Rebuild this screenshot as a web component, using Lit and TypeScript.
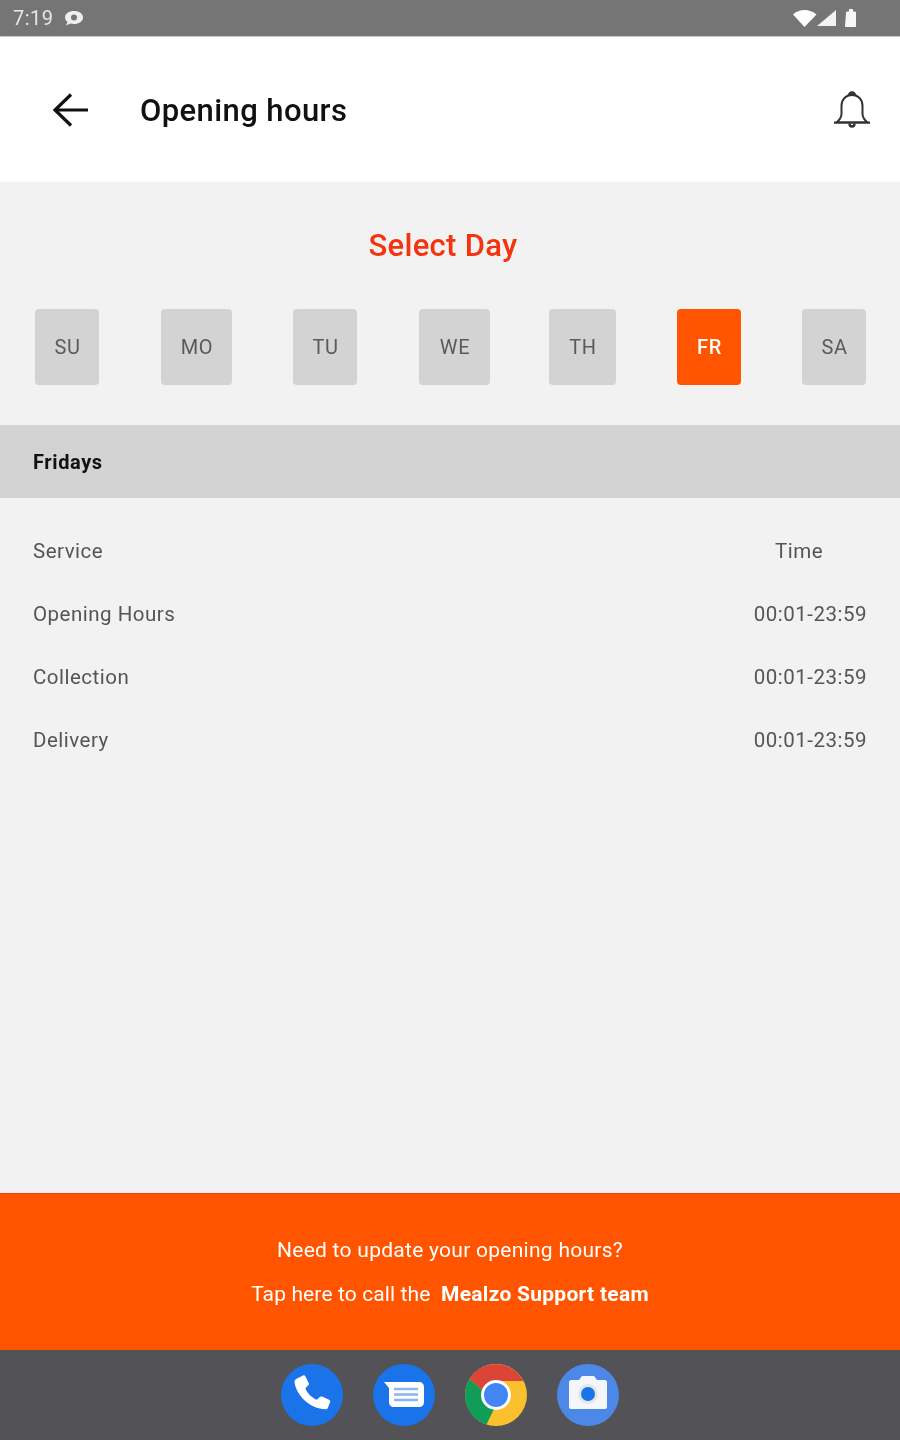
import { LitElement, html, css } from "lit";
import { customElement } from "lit/decorators.js";

const days = [
  { label: "SU", w: 64, gap: 0 }, { label: "MO", w: 71, gap: 62 }, { label: "TU", w: 64, gap: 61 }, { label: "WE", w: 71, gap: 62 },
  { label: "TH", w: 67, gap: 59 }, { label: "FR", w: 64, gap: 61, active: true }, { label: "SA", w: 64, gap: 61 },
];
const rows = [
  ["Service", "Time"],
  ["Opening Hours", "00:01-23:59"],
  ["Collection", "00:01-23:59"],
  ["Delivery", "00:01-23:59"],
];

@customElement("app-root")
export class AppRoot extends LitElement {
  static styles = css`
    :host { display: flex; flex-direction: column; width: 900px; height: 1440px; font-family: Roboto, "Liberation Sans", sans-serif; background: #f2f2f2; overflow: hidden; filter: blur(0.7px); }
    .status { height: 36px; flex: none; background: #757575; border-bottom: 1px solid #c8c8c8; display: flex; align-items: center; padding: 0 39px 0 13px; color: #e6e6e6; font-size: 20px; }
    .status .time { margin-right: 10px; letter-spacing: 0.5px; }
    .status .spacer { flex: 1; }
    .status svg { display: block; }
    .appbar { height: 145px; flex: none; background: #fff; display: flex; align-items: center; padding: 0 29px 0 51px; box-sizing: border-box; }
    .appbar h1 { margin: 2px 0 0 51px; flex: 1; font-size: 31px; font-weight: 500; letter-spacing: 0.4px; color: #111; }
    main { flex: 1; display: flex; flex-direction: column; }
    h2 { margin: 0; padding: 45px 14px 0 0; height: 83px; box-sizing: border-box; text-align: center; font-size: 31px; font-weight: 500; letter-spacing: 0.3px; line-height: 38px; color: #f4330f; }
    .days { display: flex; padding: 44px 0 0 35px; }
    .day { height: 76px; border-radius: 4px; background: #d3d3d3; color: #5a5a5a; font-size: 20px; letter-spacing: 0.6px; display: flex; align-items: center; justify-content: center; padding-left: 1px; box-sizing: border-box; }
    .day.active { background: #ff5500; color: #fff; font-weight: 500; }
    .band { margin-top: 40px; height: 73px; background: #d3d3d3; display: flex; align-items: center; padding: 0 0 0 33px; font-size: 20px; font-weight: 700; letter-spacing: 0.6px; color: #111; }
    .rows { padding: 21px 33px 0; display: flex; flex-direction: column; }
    .row { height: 63.1px; display: flex; align-items: center; justify-content: space-between; font-size: 20.5px; letter-spacing: 0.5px; color: #555; }
    .row .t { min-width: 136px; text-align: center; }
    .banner { height: 157px; flex: none; background: #ff5500; border-top: 1px solid #f8351a; box-sizing: border-box; color: #fff; display: flex; flex-direction: column; align-items: center; justify-content: center; gap: 18px; font-size: 21px; letter-spacing: 0.27px; line-height: 26px; }
    .banner p { margin: 0; }
    .banner .tap { letter-spacing: 0.12px; }
    .banner b { font-weight: 700; margin-left: 5px; letter-spacing: 0.27px; }
    .nav { height: 90px; flex: none; background: #525257; display: flex; align-items: center; justify-content: center; gap: 30px; }
    .nav svg { display: block; width: 62px; height: 62px; }
  `;

  render() {
    return html`
      <div class="status">
        <span class="time">7:19</span>
        <svg width="20" height="18" viewBox="0 0 20 18"><path fill="#eee" d="M10 2c5 0 9 2.600 9 6.500S15 15 10 15c-1.300 0-2.500-.2-3.600-.5L2 16.500l1.500-3.600C2 11.700 1 10.200 1 8.500 1 4.600 5 2 10 2z"/><circle cx="10" cy="8.500" r="3" fill="#757575"/></svg>
        <span class="spacer"></span>
        <svg width="68" height="20" viewBox="0 0 68 20">
          <path fill="#fff" d="M0 6.500C3 3.500 7 2 11.500 2S20 3.500 23.500 6.500L11.500 19z"/>
          <path fill="#f2f2f2" d="M43 2v16H24z"/>
          <path fill="#f6f6f6" d="M53 5c0-1 .6-1.500 1.500-1.500H56V1h4v2.500h1.500c1 0 1.500.5 1.500 1.500v13c0 .6-.4 1-1 1h-9c-.6 0-1-.4-1-1z"/>
        </svg>
      </div>
      <header class="appbar">
        <svg width="38" height="36" viewBox="0 0 38 36" fill="none" stroke="#111" stroke-width="3.200"><path d="M37 18H5M20 2.500L4 18 20 33.500"/></svg>
        <h1>Opening hours</h1>
        <svg width="38" height="38" viewBox="0 0 38 38" fill="none" stroke="#333" stroke-width="2"><path d="M19 4c-6.500 0-10.500 4.500-10.500 11v8c0 3-2 6-5 8.500h31c-3-2.500-5-5.500-5-8.500v-8C29.500 8.500 25.500 4 19 4z"/><path d="M16.500 4.500a2.500 2.500 0 0 1 5 0" stroke-width="3.500"/><path d="M16.500 32.500c0 2 1.200 3 2.500 3s2.500-1 2.500-3" stroke-width="2.500"/><path d="M1 31.500h36"/></svg>
      </header>
      <main>
        <h2>Select Day</h2>
        <div class="days">
          ${days.map((d) => html`<div class="day ${d.active ? "active" : ""}" style="width:${d.w}px;margin-left:${d.gap}px">${d.label}</div>`)}
        </div>
        <div class="band">Fridays</div>
        <div class="rows">
          ${rows.map((r, i) => html`<div class="row"><span>${r[0]}</span><span class=${i === 0 ? "t" : ""}>${r[1]}</span></div>`)}
        </div>
      </main>
      <div class="banner">
        <p>Need to update your opening hours?</p>
        <p><span class="tap">Tap here to call the</span> <b>Mealzo Support team</b></p>
      </div>
      <div class="nav">
        <svg viewBox="0 0 62 62"><circle cx="31" cy="31" r="31" fill="#1a73e8"/><path fill="#fff" d="M16 14.500l6-3c1-.5 2-.1 2.500.9l3.200 6.600c.4.800.2 1.700-.4 2.300l-3 3c2 5 6.500 9.500 11.500 11.500l3-2.800c.6-.6 1.500-.8 2.300-.4l7 3.200c1 .5 1.400 1.500 1 2.500l-2.200 5.500c-.4 1-1.300 1.600-2.400 1.500C29 45 15 31 13.500 18c-.1-1.500 1-2.800 2.500-3.500z"/></svg>
        <svg viewBox="0 0 62 62"><circle cx="31" cy="31" r="31" fill="#1a73e8"/><path fill="#fff" d="M11 18h35c3 0 5 2 5 5v15c0 3-2 5-5 5H21c-3 0-5-2-5-5V24z"/><path stroke="#8fb3f0" stroke-width="2.500" d="M21 25h24M21 30.500h24M21 36h24"/></svg>
        <svg viewBox="0 0 62 62">
          <circle cx="31" cy="31" r="31" fill="#fbc02d"/>
          <path fill="#db4437" d="M4.500 15A31 31 0 0 1 58.500 17L31 17c-7 0-12 4-13.500 9.500z"/>
          <path fill="#0f9d58" d="M4.500 15L17.500 26.500C16 33 21 42.500 29 45l-7.500 15.500C3 55-6 33 4.500 15z"/>
          <circle cx="31" cy="31" r="15" fill="#fff"/><circle cx="31" cy="31" r="12" fill="#4285f4"/>
        </svg>
        <svg viewBox="0 0 62 62"><circle cx="31" cy="31" r="31" fill="#4c88e8"/><path fill="#f4f6fa" d="M14 16h8l3-4h12l3 4h8c1 0 2 1 2 2v25c0 1-1 2-2 2H14c-1 0-2-1-2-2V18c0-1 1-2 2-2z"/><circle cx="31" cy="30" r="10" fill="#e4e6ea"/><circle cx="31" cy="30" r="7" fill="#1a73e8"/></svg>
      </div>
    `;
  }
}
